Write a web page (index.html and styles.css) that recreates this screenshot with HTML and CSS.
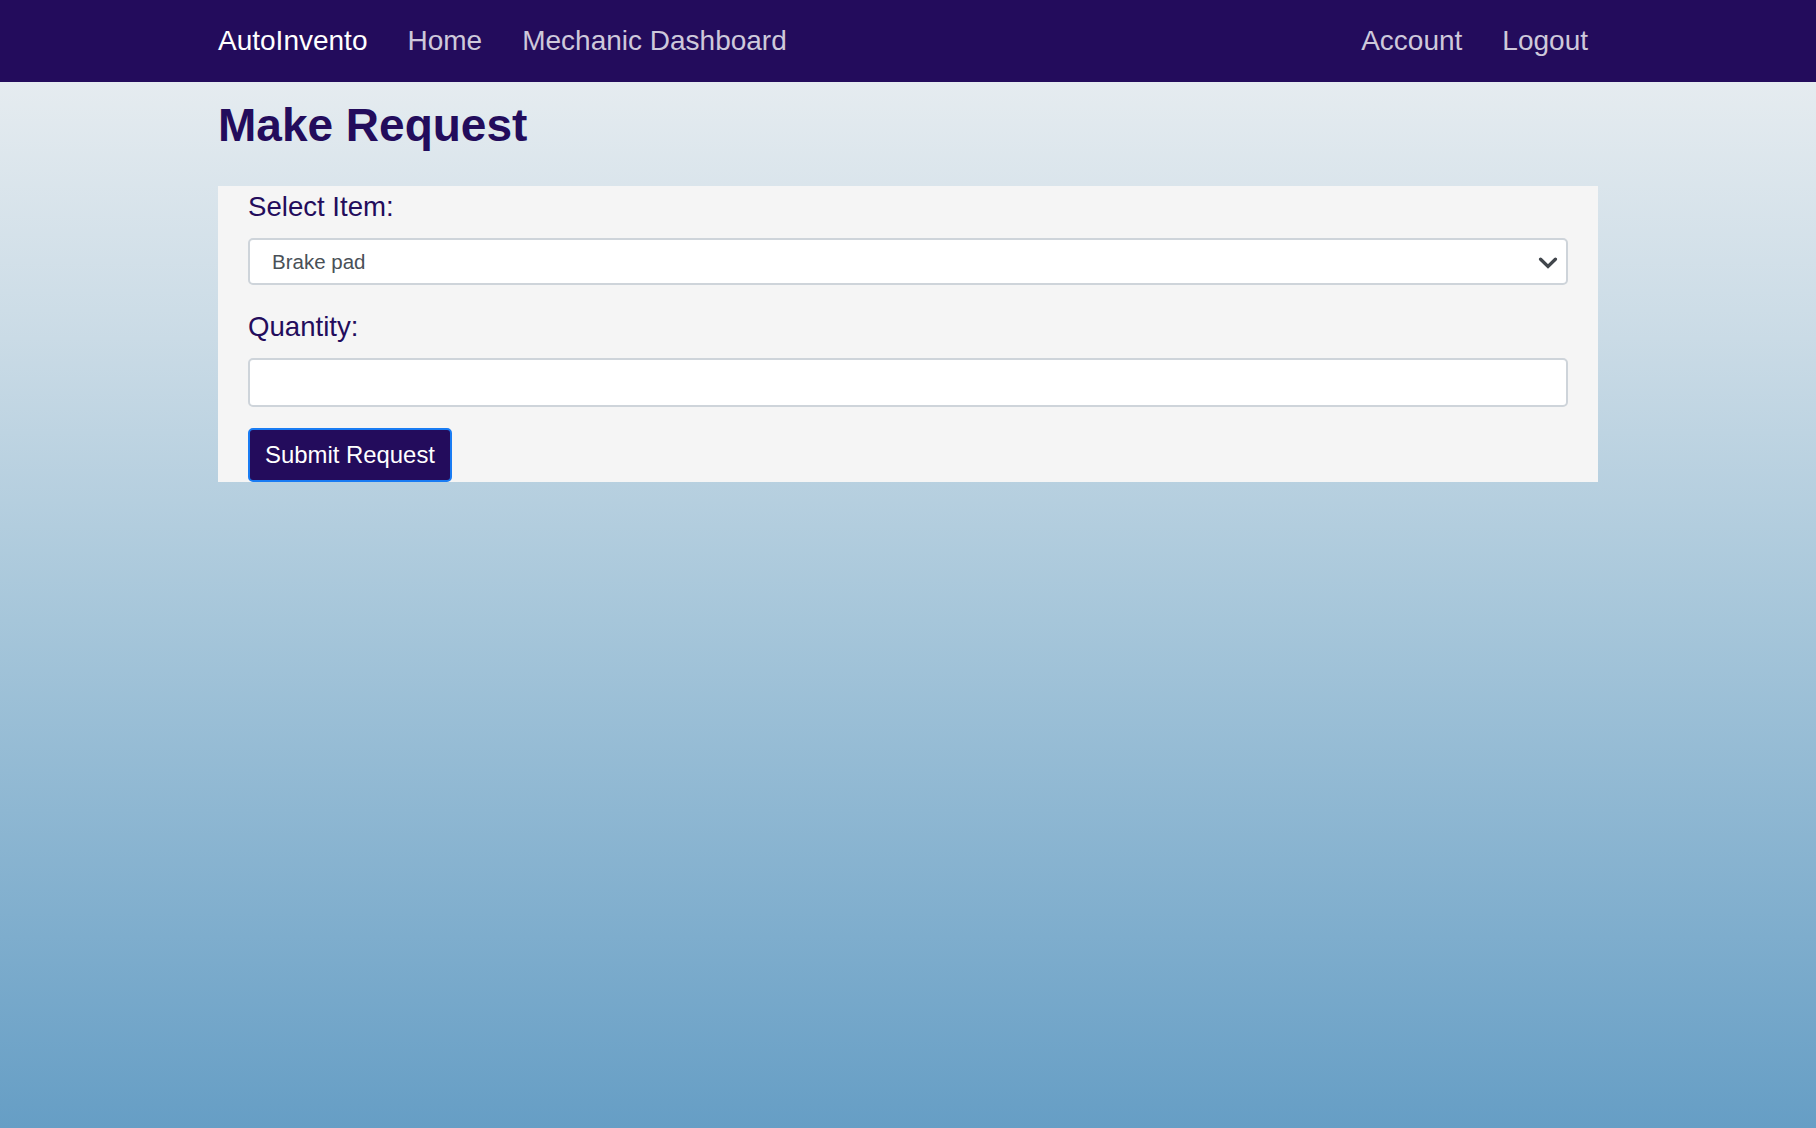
FILE: index.html
```html
<!DOCTYPE html>
<html lang="en">
<head>
<meta charset="utf-8">
<title>Make Request - AutoInvento</title>
<link rel="stylesheet" href="styles.css">
</head>
<body>
<nav class="navbar">
  <div class="nav-inner">
    <div class="nav-left">
      <a class="brand" href="#">AutoInvento</a>
      <a class="nav-link" href="#">Home</a>
      <a class="nav-link" href="#">Mechanic Dashboard</a>
    </div>
    <div class="nav-right">
      <a class="nav-link" href="#">Account</a>
      <a class="nav-link" href="#">Logout</a>
    </div>
  </div>
</nav>
<main class="container">
  <h1 class="title">Make Request</h1>
  <form class="card">
    <div class="group">
      <label class="label" for="item">Select Item:</label>
      <div class="select-wrap">
        <select id="item" class="control select">
          <option>Brake pad</option>
        </select>
        <svg class="chevron" viewBox="0 0 20 12" width="20" height="12" aria-hidden="true"><path d="M2.6 2.2L10 9.4l7.4-7.2" fill="none" stroke="#41464c" stroke-width="3.3" stroke-linecap="round" stroke-linejoin="miter"/></svg>
      </div>
    </div>
    <div class="group">
      <label class="label" for="qty">Quantity:</label>
      <input id="qty" class="control input" type="number">
    </div>
    <button class="btn" type="submit">Submit Request</button>
  </form>
</main>
</body>
</html>
```

FILE: styles.css
```css
* { box-sizing: border-box; }
html, body { margin: 0; padding: 0; }
body {
  min-height: 100vh;
  font-family: "Liberation Sans", Arial, sans-serif;
  background: linear-gradient(to bottom, #eef1f3 0%, #cadbe6 30%, #a6c6da 55%, #669ec5 100%);
  color: #230c5c;
}
.navbar {
  background: #230c5c;
  height: 82px;
}
.nav-inner {
  width: 1380px;
  margin: 0 auto;
  height: 100%;
  display: flex;
  align-items: center;
  justify-content: space-between;
  padding: 0 10px 0 0;
}
.nav-left, .nav-right {
  display: flex;
  align-items: center;
  gap: 40px;
}
.nav-inner a {
  font-size: 28px;
  text-decoration: none;
}
.brand { color: #ffffff; }
.nav-link { color: rgba(255, 255, 255, 0.78); }
.container {
  width: 1380px;
  margin: 0 auto;
}
.title {
  font-size: 46px;
  line-height: 55px;
  font-weight: bold;
  margin: 16px 0 33px;
  color: #230c5c;
}
.card {
  background: #f5f5f5;
  padding: 0 30px;
}
.group { margin-bottom: 21px; }
.label {
  display: block;
  font-size: 27.6px;
  line-height: 32px;
  padding-top: 5px;
  margin-bottom: 15px;
  color: #230c5c;
}
.control {
  display: block;
  width: 100%;
  height: 47px;
  border: 2px solid #ced4da;
  border-radius: 5px;
  background: #ffffff;
  font-family: "Liberation Sans", Arial, sans-serif;
  font-size: 20.5px;
  color: #495057;
  padding: 0 22px;
  outline: none;
}
.input { height: 49px; }
.select-wrap { position: relative; }
.select {
  appearance: none;
  -webkit-appearance: none;
  padding-right: 50px;
}
.chevron {
  position: absolute;
  right: 10px;
  top: 50%;
  margin-top: -5px;
  pointer-events: none;
}
.btn {
  display: block;
  height: 54px;
  padding: 0 15px;
  background: #230c5c;
  color: #ffffff;
  border: 2px solid #1a7cf3;
  border-radius: 5px;
  font-family: "Liberation Sans", Arial, sans-serif;
  font-size: 23.9px;
  cursor: pointer;
}
```
